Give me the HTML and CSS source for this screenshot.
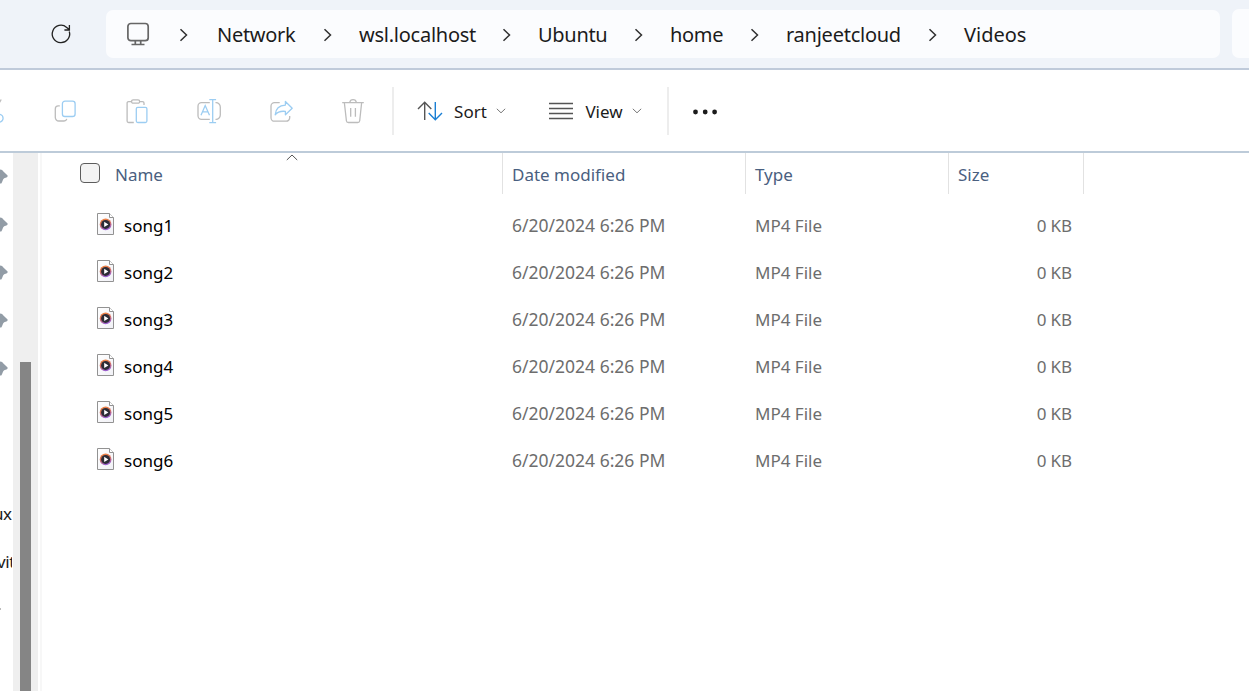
FILE: index.html
```html
<!DOCTYPE html>
<html lang="en">
<head>
<meta charset="utf-8">
<title>Videos</title>
<link rel="stylesheet" href="styles.css">
</head>
<body>
<svg class="defs" width="0" height="0">
  <defs>
    <linearGradient id="ring" x1="0" y1="0" x2="0.3" y2="1">
      <stop offset="0" stop-color="#f58a3c"/><stop offset="0.5" stop-color="#d9705a"/><stop offset="1" stop-color="#9a5fd0"/>
    </linearGradient>
    <linearGradient id="sheet" x1="0" y1="0" x2="1" y2="1">
      <stop offset="0" stop-color="#fff"/><stop offset="1" stop-color="#f1f1f6"/>
    </linearGradient>
    <symbol id="file" viewBox="0 0 18 22">
      <path d="M.5 .5H12.5L16.5 4.5V21.500H.5Z" fill="url(#sheet)" stroke="#929292"/>
      <path d="M12.5 .5V4.5H16.500" fill="#fff" stroke="#929292"/>
      <circle cx="8.600" cy="11.400" r="5.900" fill="url(#ring)"/>
      <circle cx="8.600" cy="11.400" r="4.500" fill="#2c2c36"/>
      <path d="M7.200 8.700L11.400 11.400L7.200 14.100Z" fill="#fff"/>
    </symbol>
    <symbol id="crumb" viewBox="0 0 10 14"><path d="M1.500 1.200L7.500 7L1.500 12.800" fill="none" stroke="#303030" stroke-width="1.500"/></symbol>
    <symbol id="down" viewBox="0 0 10 6"><path d="M.8 .8L5 4.800L9.200 .8" fill="none" stroke="#777" stroke-width="1"/></symbol>
    <symbol id="pin" viewBox="0 0 9 16"><path d="M0 .6C2 .6 2.500 1.400 3.400 2.600L7.600 6.400C7.800 7.300 7.300 8 6.300 8.400L4.200 9.300C2.600 10.200 2.500 13 1.300 14.600H0Z" fill="#929ca6"/></symbol>
  </defs>
</svg>

<header class="address">
  <svg class="refresh" width="24" height="24" viewBox="0 0 24 24" fill="none" stroke="#222" stroke-width="1.300"><path d="M20.300 9.500A8.700 8.700 0 1 1 17.700 5.400L20.200 7.600M20.400 3V8H15.400"/></svg>
  <nav class="path">
    <svg class="monitor" width="24" height="24" viewBox="0 0 24 24" fill="none" stroke="#666" stroke-width="1.700"><rect x="1.900" y="1.500" width="20.300" height="17.200" rx="3"/><path d="M9.300 19V22.300M14.700 19V22.300M5.500 22.500H18.500"/></svg>
    <svg class="chev first"><use href="#crumb"/></svg><span class="crumb network">Network</span>
    <svg class="chev"><use href="#crumb"/></svg><span class="crumb host">wsl.localhost</span>
    <svg class="chev"><use href="#crumb"/></svg><span class="crumb ubuntu">Ubuntu</span>
    <svg class="chev"><use href="#crumb"/></svg><span class="crumb home">home</span>
    <svg class="chev"><use href="#crumb"/></svg><span class="crumb user">ranjeetcloud</span>
    <svg class="chev"><use href="#crumb"/></svg><span class="crumb videos">Videos</span>
  </nav>
  <div class="search"></div>
</header>

<div class="toolbar">
  <div class="tool"><svg viewBox="0 0 28 28"><circle cx="20.200" cy="21.300" r="3.900" class="blue"/><path d="M22.200 2.500L20.500 5.500" class="gray"/></svg></div>
  <div class="tool"><svg viewBox="0 0 28 28"><path d="M8.800 8.900H7.300A3 3 0 0 0 4.300 11.900V20.500A3.500 3.500 0 0 0 7.800 24H13A3 3 0 0 0 15.800 21.800" class="gray"/><rect x="11.400" y="4.200" width="12.700" height="15.300" rx="2.600" class="blue"/></svg></div>
  <div class="tool"><svg viewBox="0 0 28 28"><path d="M8.500 4.600H5.600A1.500 1.500 0 0 0 4.100 6.100V24A1.500 1.500 0 0 0 5.600 25.500H10.800M16.700 4.600H19.500A1.500 1.500 0 0 1 21 6.100V8" class="gray"/><rect x="8.600" y="2.800" width="8" height="3.400" rx="1.500" class="gray"/><rect x="13.300" y="10.300" width="10.600" height="15.200" rx="1.500" class="blue"/></svg></div>
  <div class="tool"><svg viewBox="0 0 28 28"><path d="M14.800 5.700H6.500A3.500 3.500 0 0 0 3 9.200V18.800A3.500 3.500 0 0 0 6.500 22.300H14.800M20.500 5.700A4.300 4.300 0 0 1 25.300 10V18A4.300 4.300 0 0 1 20.500 22.300" class="gray"/><path d="M17.700 2.800V25.500M14.300 2.700H21.100M14.300 25.600H21.100M6 18.300L10.200 8.600L14.500 18.300M7.600 14.800H12.900" class="blue"/></svg></div>
  <div class="tool"><svg viewBox="0 0 28 28"><path d="M12.700 5.600H7.500A3.500 3.500 0 0 0 4 9.100V20.700A3.500 3.500 0 0 0 7.500 24.200H19.200A3.500 3.500 0 0 0 22.700 20.700V19" class="gray"/><path d="M18.400 4.500L25.200 11.300L18.400 17.800V14.400C13.500 13.800 10.300 15.300 8.200 17.800C8.600 12.200 12 8.300 18.400 8.100Z" class="blue" stroke-linejoin="round"/></svg></div>
  <div class="tool"><svg viewBox="0 0 28 28"><path d="M3.200 5.700H24.800M10.700 5.500A3.400 3.400 0 0 1 17.400 5.500M5.400 6L7.400 23.700A2 2 0 0 0 9.400 25.500H18.700A2 2 0 0 0 20.700 23.700L22.600 6M11.700 11V19.700M16.400 11V19.700" class="gray"/></svg></div>
  <i class="rule"></i>
  <button class="menu sort">
    <svg width="26" height="20" viewBox="0 0 26 20" fill="none" stroke-width="1.400"><path d="M7.700 19V1.500M1 8L7.700 1.300L14.300 8" stroke="#555"/><path d="M18.300 1V18.500M11.700 12L18.300 18.700L25 12" stroke="#1a7fd4"/></svg>
    <span>Sort</span><svg class="down"><use href="#down"/></svg>
  </button>
  <button class="menu view">
    <svg width="24" height="18" viewBox="0 0 24 18"><path d="M0 1.500H24M0 6.500H24M0 11.500H24M0 16.500H24" stroke="#555" stroke-width="1.400"/></svg>
    <span>View</span><svg class="down"><use href="#down"/></svg>
  </button>
  <i class="rule second"></i>
  <svg class="dots" width="26" height="8" viewBox="0 0 26 8" fill="#1b1b1b"><circle cx="3.500" cy="4" r="2.400"/><circle cx="13.200" cy="4" r="2.400"/><circle cx="22.600" cy="4" r="2.400"/></svg>
</div>

<main class="content">
  <aside class="side">
    <div class="entry"><svg class="pin"><use href="#pin"/></svg></div>
    <div class="entry"><svg class="pin"><use href="#pin"/></svg></div>
    <div class="entry"><svg class="pin"><use href="#pin"/></svg></div>
    <div class="entry"><svg class="pin"><use href="#pin"/></svg></div>
    <div class="entry"><svg class="pin"><use href="#pin"/></svg></div>
    <div class="entry"></div>
    <div class="entry"></div>
    <div class="entry"><span class="label ux">ux</span></div>
    <div class="entry"><span class="label vit">vit</span></div>
    <div class="entry"><i class="speck"></i></div>
  </aside>
  <div class="scroll"><div class="thumb"></div></div>
  <section class="list">
    <div class="grid head">
      <div class="cell hname"><i class="check"></i><span class="t-name">Name</span><svg class="caret" width="12" height="7" viewBox="0 0 12 7"><path d="M.8 6L6 1L11.200 6" fill="none" stroke="#555"/></svg></div>
      <div class="cell">Date modified</div>
      <div class="cell">Type</div>
      <div class="cell">Size</div>
    </div>
    <div class="rows">
      <div class="grid row"><div class="name"><svg class="file"><use href="#file"/></svg><span>song1</span></div><div class="date">6/20/2024 6:26 PM</div><div class="type">MP4 File</div><div class="size">0 KB</div></div>
      <div class="grid row"><div class="name"><svg class="file"><use href="#file"/></svg><span>song2</span></div><div class="date">6/20/2024 6:26 PM</div><div class="type">MP4 File</div><div class="size">0 KB</div></div>
      <div class="grid row"><div class="name"><svg class="file"><use href="#file"/></svg><span>song3</span></div><div class="date">6/20/2024 6:26 PM</div><div class="type">MP4 File</div><div class="size">0 KB</div></div>
      <div class="grid row"><div class="name"><svg class="file"><use href="#file"/></svg><span>song4</span></div><div class="date">6/20/2024 6:26 PM</div><div class="type">MP4 File</div><div class="size">0 KB</div></div>
      <div class="grid row"><div class="name"><svg class="file"><use href="#file"/></svg><span>song5</span></div><div class="date">6/20/2024 6:26 PM</div><div class="type">MP4 File</div><div class="size">0 KB</div></div>
      <div class="grid row"><div class="name"><svg class="file"><use href="#file"/></svg><span>song6</span></div><div class="date">6/20/2024 6:26 PM</div><div class="type">MP4 File</div><div class="size">0 KB</div></div>
    </div>
  </section>
</main>
</body>
</html>
```

FILE: styles.css
```css
* { box-sizing: border-box; }
body { margin: 0; height: 691px; overflow: hidden; display: flex; flex-direction: column; background: #fff; font-family: "Noto Sans", sans-serif; color: #1b1b1b; }
svg { display: block; flex: none; }
.defs { position: absolute; }

.address { flex: none; height: 70px; display: flex; align-items: flex-start; background: #eff3f9; border-bottom: 2px solid #bfcada; }
.refresh { margin: 22px 0 0 49px; }
.path { width: 1114px; height: 48px; margin: 10px 0 0 33px; display: flex; align-items: center; background: #fbfcfe; border-radius: 7px; }
.monitor { margin: -1px 0 0 20px; }
.chev { width: 10px; height: 14px; margin: 2px 26px 0 27px; }
.chev.first { margin-left: 29px; margin-right: 28px; }
.crumb { flex: none; font-size: 20px; line-height: 46px; padding-top: 2px; letter-spacing: -.3px; white-space: nowrap; }
.network { width: 79px; }
.host { width: 116px; letter-spacing: -.25px; }
.ubuntu { width: 69px; }
.home { width: 53px; }
.user { width: 115px; letter-spacing: -.25px; }
.videos { letter-spacing: 0; }
.search { flex: 1; height: 49px; margin: 9px 0 0 12px; background: #fbfcfe; border-radius: 7px 0 0 7px; }

.toolbar { flex: none; height: 83px; display: flex; align-items: center; border-bottom: 2px solid #bdcbd9; padding-top: 1px; }
.tool { flex: none; width: 72px; display: flex; justify-content: center; }
.tool:first-child { margin-left: -43px; }
.tool svg { width: 28px; height: 28px; fill: none; stroke-width: 1.3; }
.gray { stroke: #bcbcbc; }
.blue { stroke: #9ccdf2; }
.rule { width: 2px; height: 48px; margin-left: 3px; background: #ededed; }
.rule.second { margin-left: 25px; }
.menu { display: flex; align-items: center; padding: 0; border: 0; background: none; color: inherit; font: 17px/24px "Noto Sans", sans-serif; }
.sort { margin-left: 23px; }
.menu span { padding-top: 2px; }
.sort span { width: 33px; margin: 0 9px 0 11px; }
.view { margin-left: 43px; }
.view span { width: 38px; margin: 0 9px 0 12px; }
.down { width: 10px; height: 6px; }
.dots { margin: 1px 0 0 23px; }

.content { flex: 1; display: flex; }
.side { width: 12px; margin-right: 1px; overflow: hidden; }
.entry { height: 48px; display: flex; align-items: center; }
.pin { width: 9px; height: 16px; }
.label { font-size: 17px; letter-spacing: -.4px; white-space: nowrap; }
.ux { margin-left: -7px; }
.vit { margin-left: -3px; }
.speck { width: 1px; height: 2px; background: #bbb; }
.scroll { width: 25px; padding: 209px 7px 0; background: #efefef; }
.thumb { height: 329px; background: #858585; }
.list { width: 1044px; margin-left: 2px; border-left: 2px solid #f7f7f7; }
.grid { display: grid; grid-template-columns: 461px 243px 203px 135px; }
.head { height: 41px; color: #4a6080; font-size: 17px; line-height: 24px; }
.cell { border-right: 1px solid #e2e2e2; padding: 10px 0 0 9px; }
.hname { display: flex; align-items: flex-start; padding: 0 0 0 38px; }
.check { width: 20px; height: 20px; margin: 10px 15px 0 0; border: 1px solid #5c5c5c; border-radius: 4px; background: #f3f3f3; }
.t-name { width: 47px; margin-top: 10px; }
.caret { margin: 1px 0 0 124px; }
.rows { padding-top: 8px; }
.row { height: 47px; align-items: center; font-size: 17px; color: #6d6d6d; white-space: nowrap; }
.name { display: flex; align-items: center; padding-left: 55px; color: #000; }
.file { width: 18px; height: 22px; margin-top: -3px; }
.name span { margin-left: 9px; }
.date, .type { padding-left: 9px; }
.date { font-size: 17.5px; line-height: 24px; padding-bottom: 2px; }
.size { text-align: right; padding-right: 12px; letter-spacing: -.1px; }
```
